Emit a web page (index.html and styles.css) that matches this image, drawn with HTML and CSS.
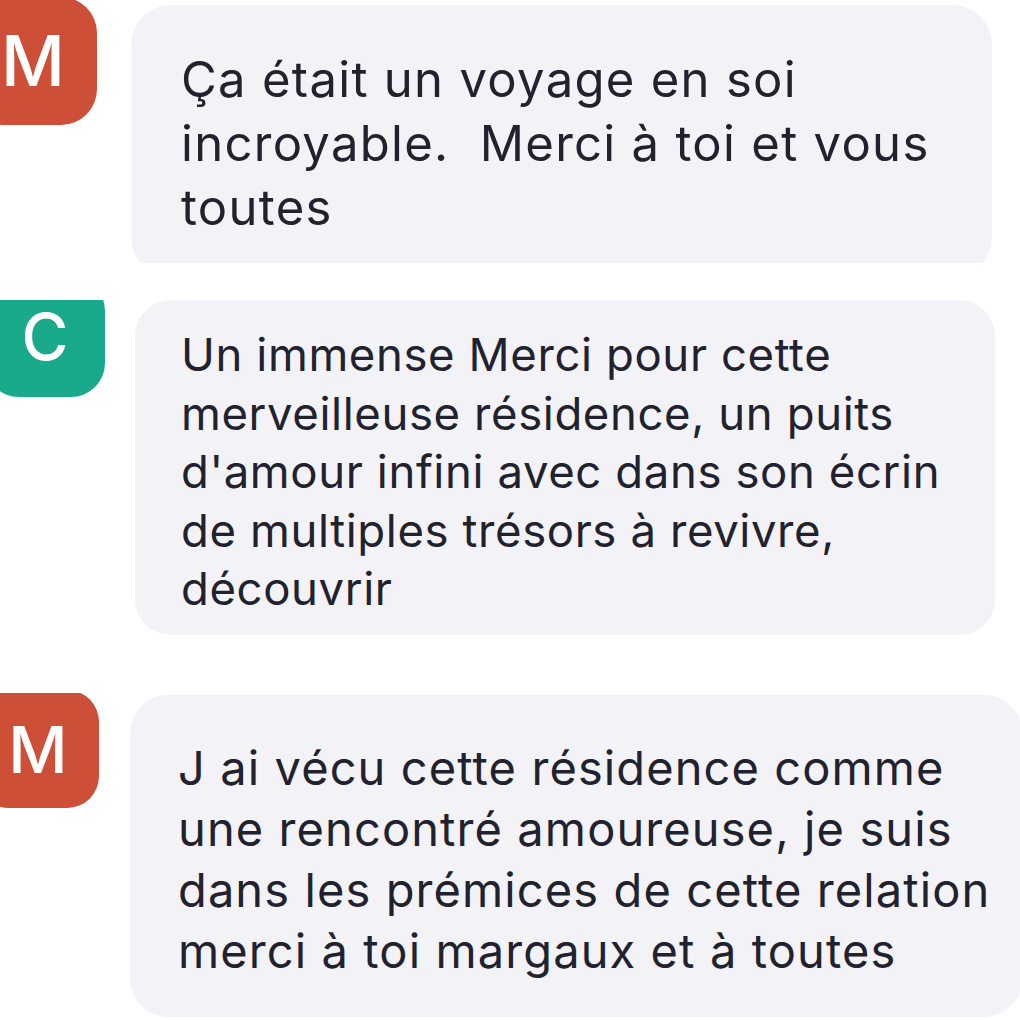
FILE: index.html
```html
<!DOCTYPE html>
<html lang="fr">
<head>
<meta charset="utf-8">
<title>Messages</title>
<link rel="stylesheet" href="styles.css">
</head>
<body>
<div class="chat">
  <div class="row row-1">
    <div class="avatar avatar-m avatar-1">M</div>
    <div class="bubble bubble-1">Ça était un voyage en soi<br>incroyable.&nbsp; Merci à toi et vous<br>toutes</div>
  </div>
  <div class="row row-2">
    <div class="avatar avatar-c avatar-2">C</div>
    <div class="bubble bubble-2">Un immense Merci pour cette<br>merveilleuse résidence, un puits<br>d'amour infini avec dans son écrin<br>de multiples trésors à revivre,<br>découvrir</div>
  </div>
  <div class="row row-3">
    <div class="avatar avatar-m avatar-3">M</div>
    <div class="bubble bubble-3">J ai vécu cette résidence comme<br>une rencontré amoureuse, je suis<br>dans les prémices de cette relation<br>merci à toi margaux et à toutes</div>
  </div>
</div>
</body>
</html>
```
FILE: styles.css
```css
html, body {
  margin: 0;
  padding: 0;
  background: #ffffff;
}
body {
  width: 1020px;
  height: 1020px;
  overflow: hidden;
  font-family: Inter, "Noto Sans", "Liberation Sans", sans-serif;
  color: #22222e;
}
.chat {
  display: flex;
  flex-direction: column;
}
.row {
  display: flex;
  align-items: flex-start;
  overflow: hidden;
  flex: none;
}
.row-1 { height: 263px; margin-bottom: 37px; }
.row-2 { height: 335px; margin-bottom: 58px; }
.row-3 { height: 327px; }

.avatar {
  flex: none;
  display: flex;
  align-items: center;
  justify-content: center;
  color: #ffffff;
  font-weight: 500;
  line-height: 1;
}
.avatar-m { background: #cd4f37; }
.avatar-c { background: #19a98b; }

.avatar-1 {
  width: 128px;
  height: 128px;
  margin-left: -31px;
  margin-top: -3px;
  border-radius: 36px;
  font-size: 70px;
}
.avatar-2 {
  width: 120px;
  height: 120px;
  margin-left: -15px;
  margin-top: -23px;
  border-radius: 34px;
  font-size: 64px;
}
.avatar-3 {
  width: 122px;
  height: 118px;
  margin-left: -23px;
  margin-top: -3px;
  border-radius: 32px;
  font-size: 65px;
}

.bubble {
  flex: none;
  box-sizing: border-box;
  background: #f2f2f7;
  white-space: nowrap;
}
.bubble-1 {
  margin-left: 34px;
  margin-top: 5px;
  width: 861px;
  height: 272px;
  border-radius: 40px;
  padding: 43px 0 0 50px;
  font-size: 49px;
  letter-spacing: 1.3px;
  line-height: 64px;
}
.bubble-2 {
  margin-left: 30px;
  width: 860px;
  height: 335px;
  border-radius: 36px;
  padding: 26px 0 0 46px;
  font-size: 45.5px;
  letter-spacing: 0.6px;
  line-height: 58.5px;
}
.bubble-3 {
  margin-left: 31px;
  margin-top: 2px;
  width: 892px;
  height: 322px;
  border-radius: 38px;
  padding: 42px 0 0 48px;
  font-size: 47px;
  letter-spacing: 1.1px;
  line-height: 61px;
}
```
